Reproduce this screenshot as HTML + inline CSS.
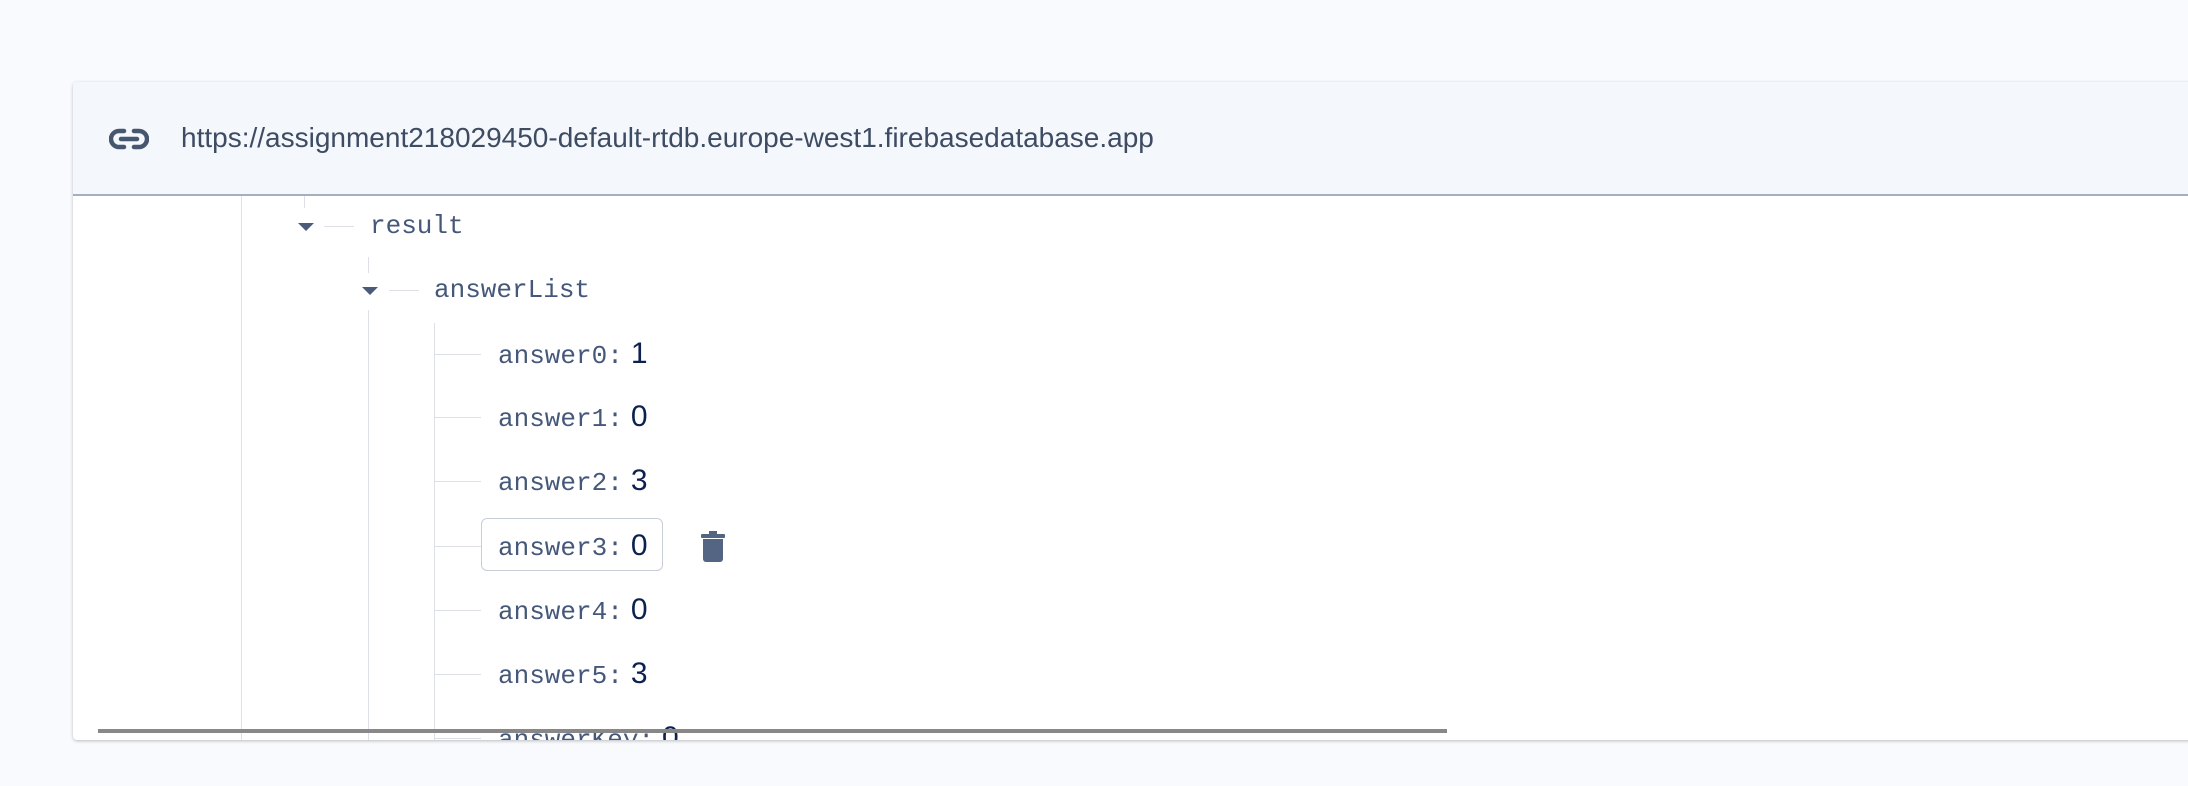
<!DOCTYPE html>
<html><head><meta charset="utf-8"><style>
body{margin:0;width:2188px;height:786px;background:#f8fafd;position:relative;overflow:hidden;font-family:"Liberation Sans",sans-serif}
.card{position:absolute;left:73px;top:82px;width:2140px;height:658px;background:#fff;border-radius:4px 0 0 4px;box-shadow:0 1px 3px rgba(0,0,0,.25)}
.hdr{position:absolute;left:0;top:0;right:0;height:112px;background:#f4f7fb;border-bottom:2px solid #a5afc0;border-radius:4px 0 0 0}
.url{position:absolute;left:108px;top:40px;font-size:28px;color:#3d4b63}
.v{position:absolute;width:1px;background:#dde1e7}
.h{position:absolute;height:1px;background:#dde1e7}
.k{position:absolute;font-family:"Liberation Mono",monospace;font-size:26px;color:#46587a;line-height:34px;white-space:nowrap}
.k b{font-family:"Liberation Sans",sans-serif;font-weight:normal;color:#0c2150;font-size:30px;margin-left:8px}
.tri{position:absolute;width:0;height:0;border-left:8px solid transparent;border-right:8px solid transparent;border-top:8px solid #4a5a78}
</style></head><body>
<div class="card">
<div class="hdr">
<svg style="position:absolute;left:36px;top:46px" width="40" height="22" viewBox="0 0 40 22"><path d="M15 3H10a8 8 0 0 0 0 16h5M25 3h5a8 8 0 0 1 0 16h-5M12 11h16" fill="none" stroke="#465671" stroke-width="4.5" stroke-linecap="round"/></svg>
<div class="url">https://assignment218029450-default-rtdb.europe-west1.firebasedatabase.app</div>
</div>
</div>
<div class="v" style="left:241px;top:196px;height:544px"></div>
<div class="v" style="left:304px;top:196px;height:12px"></div>
<div class="v" style="left:368px;top:257px;height:16px"></div>
<div class="v" style="left:368px;top:310px;height:430px"></div>
<div class="v" style="left:434px;top:323px;height:417px"></div>
<div class="tri" style="left:298px;top:223px"></div>
<div class="h" style="left:324px;top:226px;width:30px"></div>
<div class="k" style="left:370px;top:209px">result</div>
<div class="tri" style="left:362px;top:287px"></div>
<div class="h" style="left:389px;top:290px;width:30px"></div>
<div class="k" style="left:434px;top:273px">answerList</div>
<div class="h" style="left:434px;top:354px;width:47px"></div><div class="k" style="left:498px;top:337px">answer0:<b>1</b></div>
<div class="h" style="left:434px;top:417px;width:47px"></div><div class="k" style="left:498px;top:400px">answer1:<b>0</b></div>
<div class="h" style="left:434px;top:481px;width:47px"></div><div class="k" style="left:498px;top:464px">answer2:<b>3</b></div>
<div class="h" style="left:434px;top:546px;width:47px"></div>
<div style="position:absolute;left:481px;top:518px;width:180px;height:51px;border:1.5px solid #c8cdd6;border-radius:6px"></div>
<div class="k" style="left:498px;top:529px">answer3:<b>0</b></div>
<svg style="position:absolute;left:700px;top:531px" width="26" height="32" viewBox="0 0 26 32"><rect x="1" y="3" width="24" height="4" rx="1" fill="#536582"/><rect x="9" y="0" width="8" height="4" fill="#536582"/><path d="M3 8h20v20a3 3 0 0 1-3 3H6a3 3 0 0 1-3-3z" fill="#536582"/></svg>
<div class="h" style="left:434px;top:610px;width:47px"></div><div class="k" style="left:498px;top:593px">answer4:<b>0</b></div>
<div class="h" style="left:434px;top:674px;width:47px"></div><div class="k" style="left:498px;top:657px">answer5:<b>3</b></div>
<div style="position:absolute;left:73px;top:700px;width:700px;height:40px;overflow:hidden"><div class="h" style="left:361px;top:38px;width:47px"></div><div class="k" style="left:425px;top:21px">answerKey:<b>0</b></div></div>
<div style="position:absolute;left:98px;top:729px;width:1349px;height:4px;background:#888"></div>
</body></html>
